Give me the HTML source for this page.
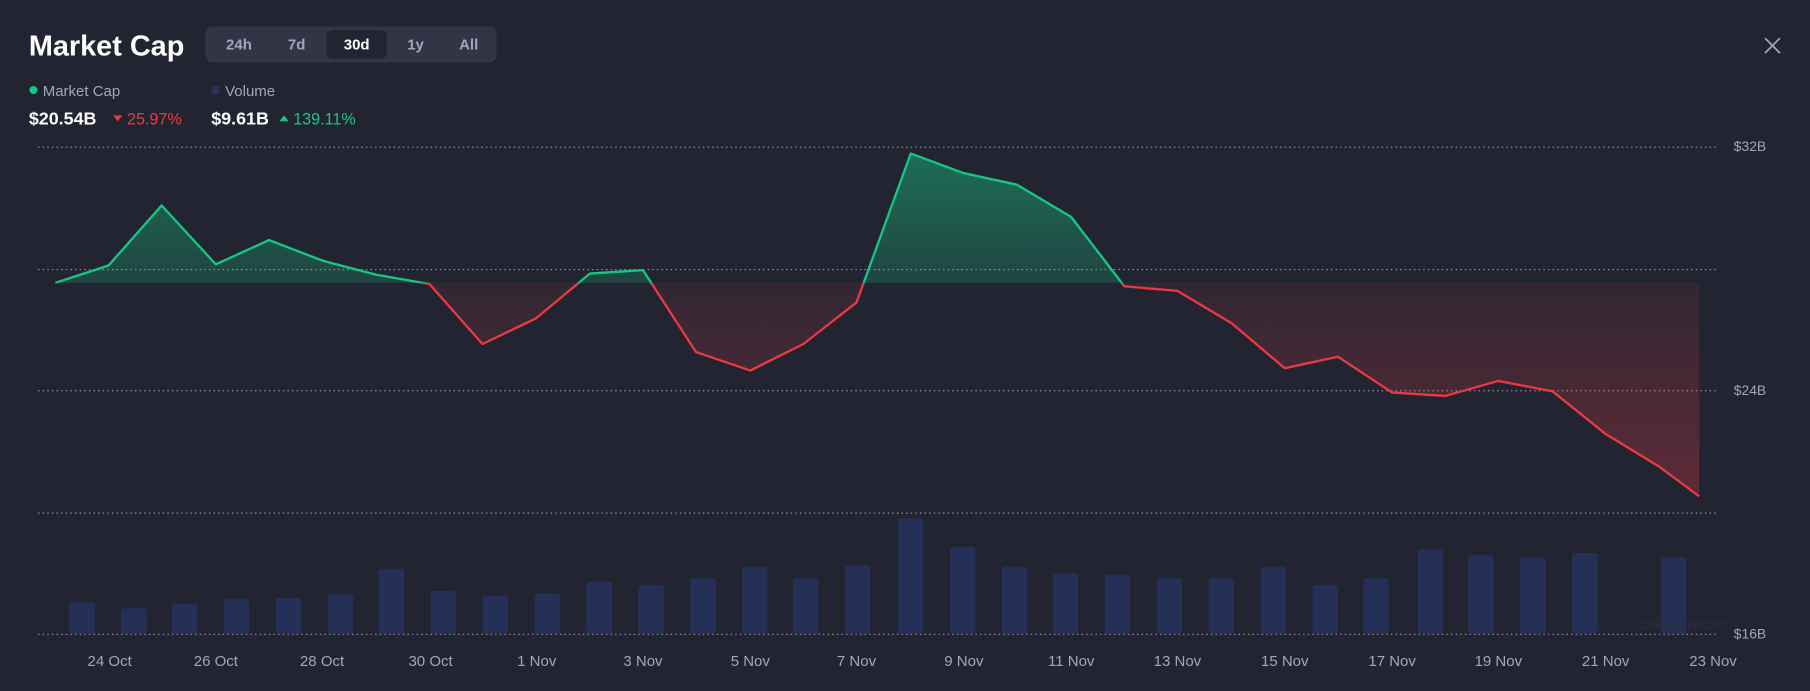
<!DOCTYPE html>
<html><head><meta charset="utf-8"><style>
html,body{margin:0;padding:0;background:#222531;overflow:hidden}
svg{display:block}
text{font-family:"Liberation Sans",sans-serif}
</style></head><body>
<svg width="1810" height="691" viewBox="0 0 1568 598.6" preserveAspectRatio="none" xmlns="http://www.w3.org/2000/svg">
<defs>
<linearGradient id="gg" x1="0" y1="133" x2="0" y2="245" gradientUnits="userSpaceOnUse"><stop offset="0" stop-color="#16c784" stop-opacity="0.45"/><stop offset="1" stop-color="#16c784" stop-opacity="0.2"/></linearGradient>
<linearGradient id="rg" x1="0" y1="245" x2="0" y2="430" gradientUnits="userSpaceOnUse"><stop offset="0" stop-color="#ea3943" stop-opacity="0.08"/><stop offset="1" stop-color="#ea3943" stop-opacity="0.3"/></linearGradient>
<clipPath id="up"><rect x="0" y="0" width="1568" height="245"/></clipPath>
<clipPath id="dn"><rect x="0" y="245" width="1568" height="400"/></clipPath>
</defs>
<rect width="1568" height="599" fill="#222531"/>
<text x="25" y="48" font-size="25" font-weight="bold" fill="#fff">Market Cap</text>
<rect x="178" y="23" width="252" height="31" rx="6" fill="#323546"/>
<rect x="283" y="26" width="52" height="25" rx="5" fill="#222531"/>
<g font-size="13" font-weight="bold" fill="#a1a7bb" text-anchor="middle">
<text x="207" y="43">24h</text><text x="257" y="43">7d</text><text x="309" y="43" fill="#fff">30d</text><text x="360" y="43">1y</text><text x="406" y="43">All</text></g>
<path d="M1529 33 L1542 46 M1542 33 L1529 46" stroke="#a1a7bb" stroke-width="1.5"/>
<circle cx="29" cy="78" r="3.5" fill="#16c784"/>
<text x="37" y="83" font-size="13" fill="#a1a7bb">Market Cap</text>
<circle cx="187" cy="78" r="3.5" fill="#283358"/>
<text x="195" y="83" font-size="13" fill="#a1a7bb">Volume</text>
<text x="25" y="108" font-size="15.5" font-weight="bold" fill="#fff">$20.54B</text>
<path d="M98 100 L106 100 L102 105Z" fill="#ea3943"/>
<text x="110" y="108" font-size="14" fill="#ea3943">25.97%</text>
<text x="183" y="108" font-size="15.5" font-weight="bold" fill="#fff">$9.61B</text>
<path d="M242 105 L250 105 L246 100Z" fill="#16c784"/>
<text x="254" y="108" font-size="14" fill="#16c784">139.11%</text>
<g stroke="#a1a7bb" stroke-width="1" stroke-dasharray="1.2 2.8" opacity="0.9">
<line x1="33" y1="127.5" x2="1487" y2="127.5"/><line x1="33" y1="233.5" x2="1487" y2="233.5"/><line x1="33" y1="338.5" x2="1487" y2="338.5"/><line x1="33" y1="444.5" x2="1487" y2="444.5"/><line x1="33" y1="549.5" x2="1487" y2="549.5"/></g>
<g font-size="12" fill="#a1a7bb"><text x="1502" y="131">$32B</text><text x="1502" y="342">$24B</text><text x="1502" y="553">$16B</text></g>
<g fill="#243055">
<rect x="60" y="522" width="22" height="27" rx="2"/><rect x="105" y="527" width="22" height="22" rx="2"/><rect x="149" y="523" width="22" height="26" rx="2"/><rect x="194" y="519" width="22" height="30" rx="2"/><rect x="239" y="518" width="22" height="31" rx="2"/><rect x="284" y="515" width="22" height="34" rx="2"/><rect x="328" y="493" width="22" height="56" rx="2"/><rect x="373" y="512" width="22" height="37" rx="2"/><rect x="418" y="516" width="22" height="33" rx="2"/><rect x="463" y="514" width="22" height="35" rx="2"/><rect x="508" y="504" width="22" height="45" rx="2"/><rect x="553" y="507" width="22" height="42" rx="2"/><rect x="598" y="501" width="22" height="48" rx="2"/><rect x="643" y="491" width="22" height="58" rx="2"/><rect x="687" y="501" width="22" height="48" rx="2"/><rect x="732" y="490" width="22" height="59" rx="2"/><rect x="778" y="449" width="22" height="100" rx="2"/><rect x="823" y="474" width="22" height="75" rx="2"/><rect x="868" y="491" width="22" height="58" rx="2"/><rect x="912" y="497" width="22" height="52" rx="2"/><rect x="957" y="498" width="22" height="51" rx="2"/><rect x="1002" y="501" width="22" height="48" rx="2"/><rect x="1047" y="501" width="22" height="48" rx="2"/><rect x="1092" y="491" width="22" height="58" rx="2"/><rect x="1137" y="507" width="22" height="42" rx="2"/><rect x="1181" y="501" width="22" height="48" rx="2"/><rect x="1228" y="476" width="22" height="73" rx="2"/><rect x="1272" y="481" width="22" height="68" rx="2"/><rect x="1317" y="483" width="22" height="66" rx="2"/><rect x="1362" y="479" width="22" height="70" rx="2"/><rect x="1439" y="483" width="22" height="66" rx="2"/></g>
<text x="1420" y="545" font-size="11" fill="#2a2e3e">CoinMarketCap</text>
<polygon clip-path="url(#up)" fill="url(#gg)" points="48,245 48,245 94,230 140,178 187,229 233,208 280,226 326,238 372,246 418,298 464,276 511,237 557,234 603,305 650,321 696,298 742,262 789,133 835,150 881,160 928,188 974,248 1020,252 1067,280 1113,319 1159,309 1206,340 1252,343 1298,330 1345,339 1391,376 1437,404 1472,430 1472,245"/>
<polygon clip-path="url(#dn)" fill="url(#rg)" points="48,245 48,245 94,230 140,178 187,229 233,208 280,226 326,238 372,246 418,298 464,276 511,237 557,234 603,305 650,321 696,298 742,262 789,133 835,150 881,160 928,188 974,248 1020,252 1067,280 1113,319 1159,309 1206,340 1252,343 1298,330 1345,339 1391,376 1437,404 1472,430 1472,245"/>
<polyline clip-path="url(#up)" fill="none" stroke="#16c784" stroke-width="2" stroke-linejoin="round" points="48,245 94,230 140,178 187,229 233,208 280,226 326,238 372,246 418,298 464,276 511,237 557,234 603,305 650,321 696,298 742,262 789,133 835,150 881,160 928,188 974,248 1020,252 1067,280 1113,319 1159,309 1206,340 1252,343 1298,330 1345,339 1391,376 1437,404 1472,430"/>
<polyline clip-path="url(#dn)" fill="none" stroke="#ea3943" stroke-width="2" stroke-linejoin="round" points="48,245 94,230 140,178 187,229 233,208 280,226 326,238 372,246 418,298 464,276 511,237 557,234 603,305 650,321 696,298 742,262 789,133 835,150 881,160 928,188 974,248 1020,252 1067,280 1113,319 1159,309 1206,340 1252,343 1298,330 1345,339 1391,376 1437,404 1472,430"/>
<g font-size="13" fill="#a1a7bb" text-anchor="middle">
<text x="95" y="577">24 Oct</text><text x="187" y="577">26 Oct</text><text x="279" y="577">28 Oct</text><text x="373" y="577">30 Oct</text><text x="465" y="577">1 Nov</text><text x="557" y="577">3 Nov</text><text x="650" y="577">5 Nov</text><text x="742" y="577">7 Nov</text><text x="835" y="577">9 Nov</text><text x="928" y="577">11 Nov</text><text x="1020" y="577">13 Nov</text><text x="1113" y="577">15 Nov</text><text x="1206" y="577">17 Nov</text><text x="1298" y="577">19 Nov</text><text x="1391" y="577">21 Nov</text><text x="1484" y="577">23 Nov</text></g>
</svg>
</body></html>
